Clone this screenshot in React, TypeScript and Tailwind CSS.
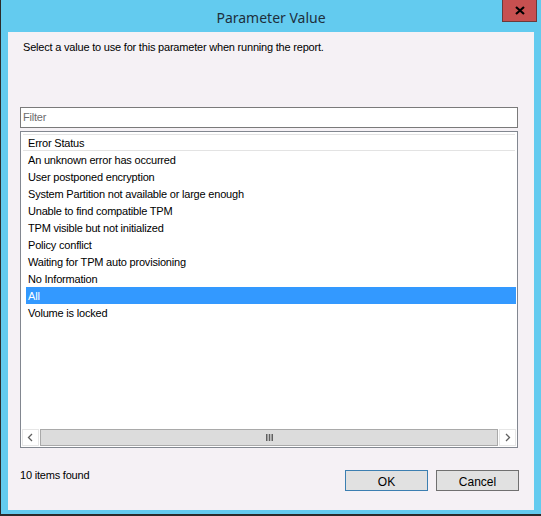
import React from "react";

const items = [
  "An unknown error has occurred",
  "User postponed encryption",
  "System Partition not available or large enough",
  "Unable to find compatible TPM",
  "TPM visible but not initialized",
  "Policy conflict",
  "Waiting for TPM auto provisioning",
  "No Information",
  "All",
  "Volume is locked",
];

export default function App() {
  return (
    <div
      className="w-[541px] h-[516px] bg-[#63cbef] border-l border-b-2 border-[#2b2b2b] flex flex-col overflow-hidden"
      style={{ fontFamily: '"Liberation Sans", Arial, sans-serif' }}
    >
      <div className="h-[32px] relative flex items-center justify-center shrink-0">
        <span
          className="text-[14px] text-[#1e2f3c] mt-[3px]"
          style={{ fontFamily: '"Noto Sans", "Open Sans", sans-serif' }}
        >
          Parameter Value
        </span>
        <div className="absolute right-[4px] top-0 w-[35px] h-[22px] bg-[#c75050] border border-[#6b3a3a] border-t-0 flex items-center justify-center">
          <svg width="10" height="9" viewBox="0 0 10 9">
            <path d="M1 1 L9 8 M9 1 L1 8" stroke="#000" strokeWidth="2.2" />
          </svg>
        </div>
      </div>
      <div className="flex-1 ml-[7px] mr-[7px] mb-[4px] bg-[#f5f1f5] flex flex-col pl-[12px] pr-[16px] text-[11px] tracking-[-0.2px] text-black">
        <div className="mt-[8px] ml-[3px] leading-[14px]">
          Select a value to use for this parameter when running the report.
        </div>
        <div className="mt-[53px] h-[21px] border border-[#7a7a7a] bg-white flex items-center pl-[2px] text-[#6d6d6d]">
          Filter
        </div>
        <div className="mt-[3px] h-[317px] border border-[#828790] bg-white p-px flex flex-col">
          <div className="mx-px mt-[1px] h-[17px] border-t border-b border-[#e3e3e3] flex items-center pl-[5px] pt-[2px]">
            Error Status
          </div>
          <div className="flex flex-col pl-[4px]">
            {items.map((it) => (
              <div
                key={it}
                className={`h-[17px] flex items-center pl-[2px] pt-[2px] ${
                  it === "All" ? "bg-[#3399ff] text-white" : ""
                }`}
              >
                {it}
              </div>
            ))}
          </div>
          <div className="flex-1" />
          <div className="h-[17px] flex">
            <div className="w-[17px] border border-[#e6e6e6] bg-white flex items-center justify-center">
              <svg width="7" height="9" viewBox="0 0 7 9">
                <path d="M5 1 L1.5 4.5 L5 8" stroke="#606060" strokeWidth="1.3" fill="none" />
              </svg>
            </div>
            <div className="flex-1 ml-px mr-px bg-[#dcdcdc] border border-[#a9a9a9] flex items-center justify-center">
              <svg width="7" height="7" viewBox="0 0 7 7">
                <path d="M0 0h1.5v7H0zM2.75 0h1.5v7h-1.5zM5.5 0H7v7H5.5z" fill="#606060" />
              </svg>
            </div>
            <div className="w-[17px] border border-[#e6e6e6] bg-white flex items-center justify-center">
              <svg width="7" height="9" viewBox="0 0 7 9">
                <path d="M2 1 L5.5 4.5 L2 8" stroke="#606060" strokeWidth="1.3" fill="none" />
              </svg>
            </div>
          </div>
        </div>
        <div className="flex mt-[23px]">
          <div className="flex-1 leading-[14px] mt-[-3px]">10 items found</div>
          <button className="w-[83px] h-[21px] mt-[-1px] bg-[#e1e1e1] border border-[#3c7fb1] text-[12px] tracking-normal mr-[8px] flex items-center justify-center pt-[3px]">
            OK
          </button>
          <button className="w-[83px] h-[21px] mt-[-1px] bg-[#e1e1e1] border border-[#707070] text-[12px] tracking-normal mr-[-1px] flex items-center justify-center pt-[3px]">
            Cancel
          </button>
        </div>
      </div>
    </div>
  );
}
